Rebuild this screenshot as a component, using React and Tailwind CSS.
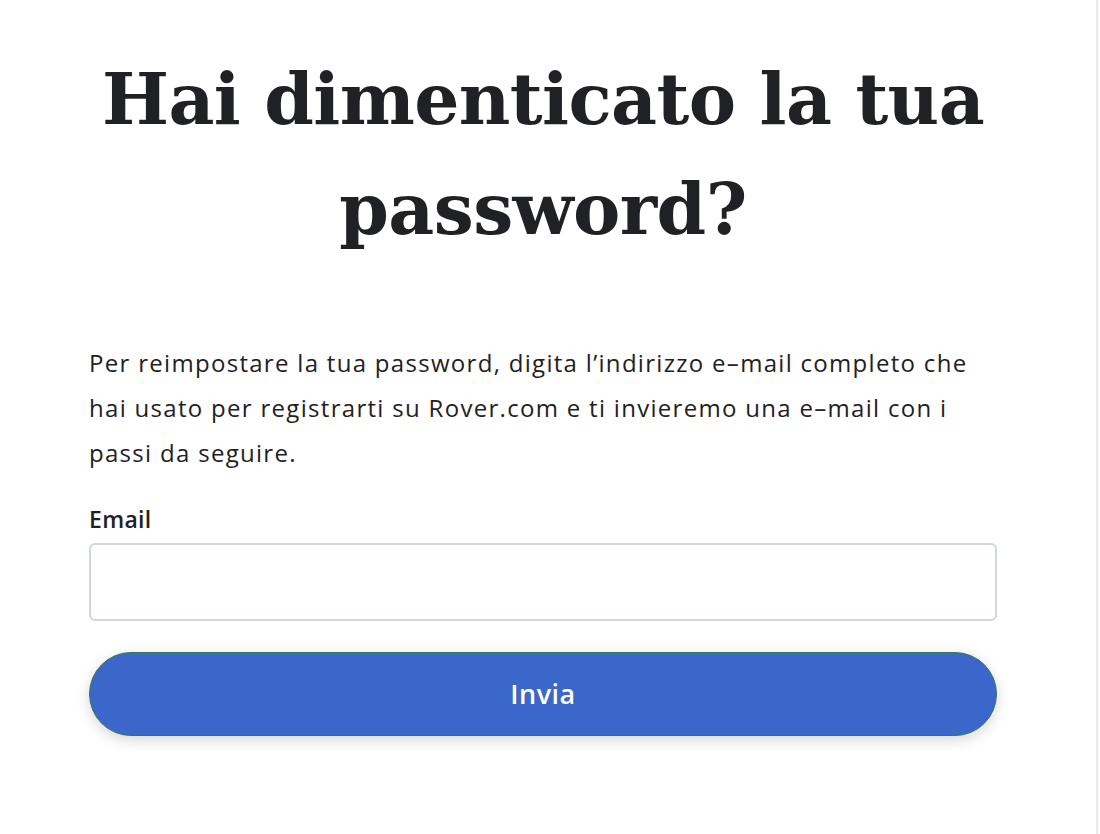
export default function App() {
  return (
    <div className="min-h-[834px] w-[1100px] bg-white">
      <div className="min-h-[834px] w-[1098px] border-r-2 border-[#ebebf0]">
        <div className="ml-[89px] w-[908px] pt-[44px] text-[#1f2124]">
          {/* Title */}
          <h1 className="text-center font-['DejaVu_Serif',serif] text-[71px] font-bold leading-[110px] tracking-[-0.6px]">
            Hai dimenticato la tua password?
          </h1>

          <p className="mt-[76px] font-['Open_Sans',sans-serif] text-[24px] leading-[45px] tracking-[1.3px]">
            Per reimpostare la tua password, digita l’indirizzo e–mail completo che hai usato per
            registrarti su Rover.com e ti invieremo una e–mail con i passi da seguire.
          </p>

          {/* Form */}
          <form className="mt-[28px]" onSubmit={(e) => e.preventDefault()}>
            <label className="block font-['Open_Sans',sans-serif] text-[23px] font-semibold leading-[32px] tracking-[0.3px]">
              Email
            </label>
            <input
              type="email"
              className="mt-[8px] block h-[78px] w-full rounded-[6px] border-2 border-[#d0d7df] bg-white px-4 font-['Open_Sans',sans-serif] text-[23px] outline-none"
            />
            <button
              type="submit"
              className="mt-[31px] flex h-[84px] w-full items-center justify-center rounded-full border border-[#2f7d4e] bg-[#3b66ca] font-['Open_Sans',sans-serif] text-[27px] font-semibold tracking-[0.5px] text-white shadow-[0_4px_14px_rgba(0,0,0,0.16)]"
            >
              Invia
            </button>
          </form>
        </div>
      </div>
    </div>
  );
}
